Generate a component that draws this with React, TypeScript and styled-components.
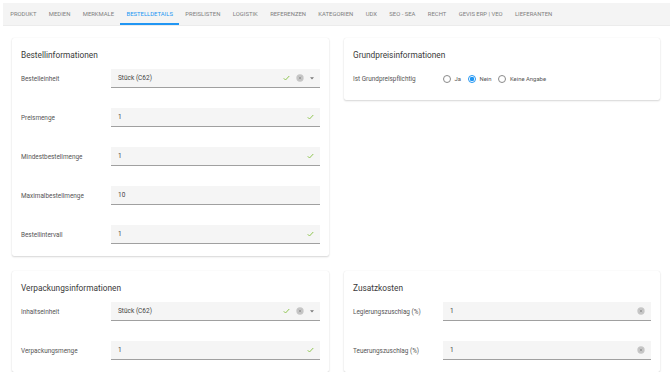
import React from 'react';
import styled, { createGlobalStyle } from 'styled-components';

const GlobalStyle = createGlobalStyle`
  html, body {
    margin: 0;
    padding: 0;
    background: #fff;
    font-family: Roboto, "Liberation Sans", sans-serif;
  }
`;

const tabs = [
  'Produkt',
  'Medien',
  'Merkmale',
  'Bestelldetails',
  'Preislisten',
  'Logistik',
  'Referenzen',
  'Kategorien',
  'UDX',
  'SEO - SEA',
  'Recht',
  'GEVIS ERP | VEO',
  'Lieferanten',
];

const CheckIcon = () => (
  <svg width="7" height="6" viewBox="0 0 14 12">
    <path d="M1.5 6.5l3.5 3.5L12.5 2" fill="none" stroke="#8bc34a" strokeWidth="1.9" />
  </svg>
);

const ClearIcon = () => (
  <svg width="8" height="8" viewBox="0 0 24 24">
    <circle cx="12" cy="12" r="11" fill="#c6c6c6" />
    <path d="M8.5 8.5l7 7M15.5 8.5l-7 7" stroke="#8c8c8c" strokeWidth="2" />
  </svg>
);

const ArrowIcon = () => (
  <svg width="4" height="3" viewBox="0 0 8 5">
    <path d="M0 0h8L4 4.5z" fill="#7a7a7a" />
  </svg>
);

export default function App() {
  return (
    <Page>
      <GlobalStyle />
      <TabBar>
        {tabs.map(tab => (
          <Tab key={tab} active={tab === 'Bestelldetails'}>
            {tab}
          </Tab>
        ))}
      </TabBar>
      <Content>
        <Card>
          <CardTitle>Bestellinformationen</CardTitle>
          <Rows>
            <Field label="Bestelleinheit" value="Stück (C62)" valid clearable select />
            <Field label="Preismenge" value="1" valid />
            <Field label="Mindestbestellmenge" value="1" valid />
            <Field label="Maximalbestellmenge" value="10" />
            <Field label="Bestellintervall" value="1" valid />
          </Rows>
        </Card>
        <Card>
          <CardTitle>Grundpreisinformationen</CardTitle>
          <Rows>
            <Row>
              <Label>Ist Grundpreispflichtig</Label>
              <RadioGroup>
                {['Ja', 'Nein', 'Keine Angabe'].map(opt => (
                  <RadioOption key={opt}>
                    <RadioCircle checked={opt === 'Nein'} />
                    {opt}
                  </RadioOption>
                ))}
              </RadioGroup>
            </Row>
          </Rows>
        </Card>
        <Card>
          <CardTitle>Verpackungsinformationen</CardTitle>
          <Rows>
            <Field label="Inhaltseinheit" value="Stück (C62)" valid clearable select />
            <Field label="Verpackungsmenge" value="1" valid />
          </Rows>
        </Card>
        <Card>
          <CardTitle>Zusatzkosten</CardTitle>
          <Rows>
            <Field label="Legierungszuschlag (%)" value="1" clearable />
            <Field label="Teuerungszuschlag (%)" value="1" clearable />
          </Rows>
        </Card>
      </Content>
    </Page>
  );
}

const Field = ({
  label,
  value,
  valid,
  clearable,
  select,
}: {
  label: string;
  value: string;
  valid?: boolean;
  clearable?: boolean;
  select?: boolean;
}) => (
  <Row>
    <Label>{label}</Label>
    <Input>
      <InputValue>{value}</InputValue>
      <Icons>
        {valid ? <CheckIcon /> : null}
        {clearable ? <ClearIcon /> : null}
        {select ? <ArrowIcon /> : null}
      </Icons>
    </Input>
  </Row>
);

const Page = styled.div`
  padding: 3px 0 0 3px;
`;

const TabBar = styled.div`
  display: flex;
  height: 22px;
  background: #f4f4f4;
  border-bottom: 1px solid #ececec;
  padding-left: 1px;
`;

const Tab = styled.div<{ active?: boolean }>`
  display: flex;
  align-items: center;
  padding: 2px 6.2px 0;
  font-size: 5.9px;
  font-weight: 400;
  text-transform: uppercase;
  color: ${p => (p.active ? '#2196f3' : '#808080')};
  border-bottom: 2px solid ${p => (p.active ? '#2196f3' : 'transparent')};
`;

const Content = styled.div`
  display: grid;
  grid-template-columns: 317px 316px;
  column-gap: 15px;
  row-gap: 15px;
  align-items: start;
  padding: 12px 10px 0 9px;
`;

const Card = styled.div`
  background: #fff;
  border-radius: 2px;
  box-shadow: 0 1px 2px rgba(0, 0, 0, 0.16), 0 0 1px rgba(0, 0, 0, 0.1);
  padding: 11px 9px 12px;
`;

const CardTitle = styled.div`
  font-size: 8.3px;
  line-height: 12px;
  color: #3a3a3a;
  margin-bottom: 8px;
`;

const Rows = styled.div`
  display: flex;
  flex-direction: column;
  gap: 20px;
`;

const Row = styled.div`
  display: flex;
  align-items: center;
  height: 19px;
`;

const Label = styled.div`
  width: 90px;
  flex-shrink: 0;
  font-size: 6.4px;
  color: #555;
`;

const Input = styled.div`
  flex: 1;
  height: 19px;
  box-sizing: border-box;
  display: flex;
  align-items: center;
  padding: 0 6px 0 7px;
  background: #f5f5f5;
  border-bottom: 1px solid #a0a0a0;
`;

const InputValue = styled.span`
  flex: 1;
  font-size: 6.5px;
  color: #444;
`;

const Icons = styled.div`
  display: flex;
  align-items: center;
  gap: 6px;
`;

const RadioGroup = styled.div`
  display: flex;
  align-items: center;
  gap: 7px;
`;

const RadioOption = styled.label`
  display: flex;
  align-items: center;
  gap: 3.5px;
  font-size: 5.9px;
  color: #555;
`;

const RadioCircle = styled.span<{ checked?: boolean }>`
  width: 8px;
  height: 8px;
  box-sizing: border-box;
  border-radius: 50%;
  border: 1px solid ${p => (p.checked ? '#2196f3' : '#8a8a8a')};
  background: ${p =>
    p.checked ? 'radial-gradient(circle, #2196f3 0 2px, #fff 2.4px)' : '#fff'};
`;
